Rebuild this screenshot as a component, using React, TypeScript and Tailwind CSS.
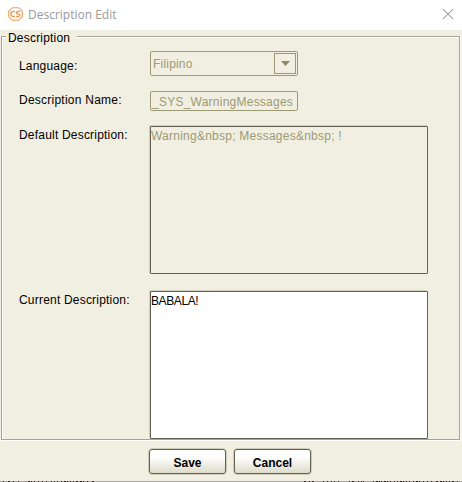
import React from "react";

const BOTTOM_TICKS = [3, 8, 13, 18, 28, 31, 34, 38, 42, 46, 51, 54, 57, 61, 64, 67, 70, 73, 76, 80, 83, 87, 92, 304, 309, 312, 323, 327, 331, 334, 338, 349, 352, 358, 361, 363, 373, 376, 379, 381, 384, 387, 390, 394, 397, 400, 403, 406, 409, 413, 416, 419, 423, 427, 431, 436, 440, 443, 446, 449, 452, 457];

function Row({ label, className, labelClass, children }: { label: string; className: string; labelClass: string; children: React.ReactNode }) {
  return (
    <div className={`flex items-start ${className}`}>
      <div className={`shrink-0 whitespace-nowrap pl-[16px] leading-[14px] ${labelClass}`}>{label}</div>
      {children}
    </div>
  );
}

function PushButton({ children }: { children: string }) {
  return (
    <button className="h-[27px] w-[79px] rounded-[4px] border border-[#cecdbb] p-0">
      <span className="flex h-[25px] items-center justify-center rounded-[3px] border border-[#626250] bg-linear-to-b from-white from-30% to-[#dddccb] pt-[2px] text-[12px] font-bold leading-[14px] text-black">
        {children}
      </span>
    </button>
  );
}

export default function App() {
  return (
    <div className="flex h-[482px] w-[462px] flex-col overflow-hidden bg-[#f1efe2] font-['Liberation_Sans',Arial,sans-serif] text-[12px] text-black">
      <header className="flex h-[30px] shrink-0 items-center bg-white pl-[8px] pr-[8px]">
        <svg className="mt-[-3px]" width="15" height="14" viewBox="0 0 15 15" preserveAspectRatio="none" fill="none" stroke="#ee9d59">
          <path d="M4.5.7h6l3.8 3.8v6l-3.8 3.8h-6L.7 10.5v-6z" strokeWidth="1.1" />
          <path d="M7 4.8H4.5L3 6.2v2.6l1.5 1.4H7M12.3 4.8H9.4L8.4 6v.8l3.4 1.4v1l-1 1H8" strokeWidth="1.4" />
        </svg>
        <h1 className="ml-[5px] mt-[-1px] whitespace-nowrap font-['Open_Sans','Noto_Sans',sans-serif] text-[12px] font-normal text-[#999]">Description Edit</h1>
        <svg className="ml-auto mt-[-2px]" width="12" height="12" viewBox="0 0 12 12" stroke="#929292" strokeWidth="1.05">
          <path d="M1 1l10 10M11 1L1 11" />
        </svg>
      </header>

      <main className="ml-[1px] mt-[6px] h-[405px] w-[460px] shrink-0 border-b border-r border-white">
        <section className="h-[404px] w-[459px] border border-[#a5a498]">
          <div className="h-full border-l border-t border-white">
            <h2 className="relative left-[3px] -mt-[7px] h-[14px] w-[71px] whitespace-nowrap bg-[#f1efe2] pl-[2px] text-[12px] font-normal leading-[14px] tracking-[0.2px]">Description</h2>

            <Row label="Language:" className="mt-[6px] h-[40px]" labelClass="w-[147px] pt-[8px] tracking-[0.2px]">
              <div className="flex h-[25px] w-[148px] items-center rounded-[2px] border border-[#9c9a73] pl-[2px] text-[#9c9a73]">
                <span className="tracking-[0.2px]">Filipino</span>
                <div className="ml-auto mr-[1px] flex h-[21px] w-[22px] items-center justify-center border border-[#9c9a73]">
                  <svg width="9" height="5" viewBox="0 0 9 5" fill="#8d8b65"><path d="M0 0h9L4.5 5z" /></svg>
                </div>
              </div>
            </Row>

            <Row label="Description Name:" className="h-[34px]" labelClass="w-[147px] pt-[2px] tracking-[0.24px]">
              <div className="flex h-[20px] w-[148px] items-center rounded-[2px] border border-[#9c9a73] pl-px pt-px tracking-[0.24px] text-[#9c9a73]">_SYS_WarningMessages</div>
            </Row>

            <Row label="Default Description:" className="h-[165px]" labelClass="w-[146px] pt-[3px] tracking-[0.2px]">
              <div className="h-[149px] w-[279px] rounded-[2px] border-l border-t border-[#d0cfbd]">
                <div className="h-[148px] w-[278px] rounded-[1px] border border-[#626250] pt-[2px] leading-[14px] tracking-[0.24px] text-[#9c9a73]">Warning&amp;nbsp; Messages&amp;nbsp; !</div>
              </div>
            </Row>

            <Row label="Current Description:" className="h-[149px]" labelClass="w-[146px] pt-[3px] tracking-[0.2px]">
              <div className="h-[149px] w-[279px] rounded-[2px] border-l border-t border-[#d0cfbd]">
                <div className="h-[148px] w-[278px] rounded-[1px] border border-[#626250] bg-white pt-[2px] leading-[14px] tracking-[-0.4px]">BABALA!</div>
              </div>
            </Row>
          </div>
        </section>
      </main>

      <footer className="mt-[7px] flex h-[33px] shrink-0 gap-[6px] pl-[148px]">
        <PushButton>Save</PushButton>
        <PushButton>Cancel</PushButton>
      </footer>
      <svg className="block h-px w-full shrink-0" viewBox="0 0 462 1" preserveAspectRatio="none" shapeRendering="crispEdges">
        <rect width="462" height="1" fill="#aaa6a2" />
        {BOTTOM_TICKS.map((x) => <rect key={x} x={x} width={x % 4 === 0 ? 2 : 1} height="1" fill="#282222" />)}
      </svg>
    </div>
  );
}
